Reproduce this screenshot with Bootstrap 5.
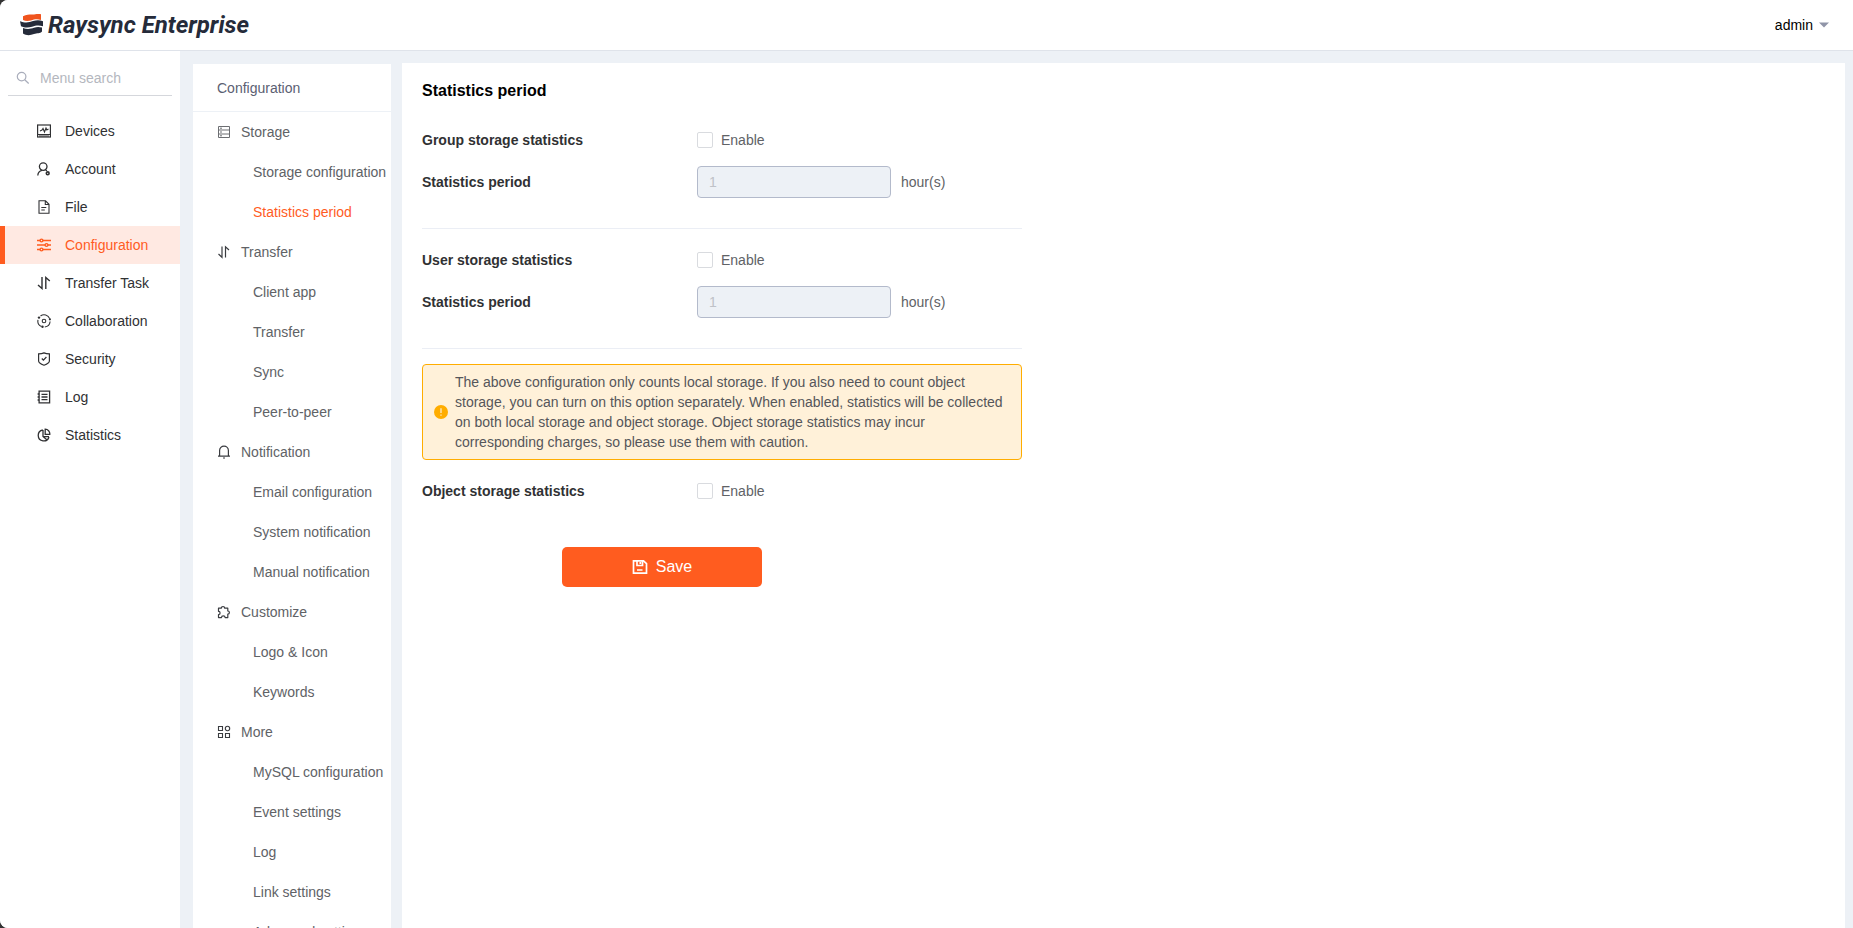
<!DOCTYPE html>
<html lang="en">
<head>
<meta charset="utf-8">
<meta name="viewport" content="width=device-width, initial-scale=1">
<title>Raysync Enterprise</title>
<link href="https://cdn.jsdelivr.net/npm/bootstrap@5.3.0/dist/css/bootstrap.min.css" rel="stylesheet">
<style>
  :root { --brand: #ff5c1f; --page: #edf1f6; --ink: #303133; --soft: #606266; }
  html { background: #333; }
  body { background: transparent; font-family: "Liberation Sans", Arial, sans-serif; font-size: 14px; line-height: 20px; color: var(--soft); }
  a { color: inherit; text-decoration: none; }
  svg { flex: none; }
  .app { background: var(--page); border-radius: 8px 0 0 8px; }
  .topbar { height: 51px; background: #fff; border-bottom: 1px solid #dfe3ea; padding: 0 24px 0 20px; }
  .brand-name { font-family: Roboto, sans-serif; font-weight: 700; font-style: italic; font-size: 24px; line-height: 28px; color: #252b3a; }
  .user-btn { color: #000; font-size: 14px; line-height: 20px; gap: 6px; }
  .side { width: 180px; background: #fff; }
  .search { margin: 0 8px 16px; height: 45px; padding: 10px 8px 0; border-bottom: 1px solid #d5d7dc; gap: 10px; }
  .search input { font-size: 14px; outline: 0; background: none; }
  .search input::placeholder { color: #b4b7be; opacity: 1; }
  .side-link { height: 38px; padding: 0 0 0 32px; border-left: 5px solid transparent; gap: 14px; color: var(--ink); }
  .side-link.active { background: #ffe9e2; border-color: var(--brand); color: var(--brand); }
  .subnav { width: 198px; background: #fff; margin: 13px 11px 0 13px; }
  .subnav-head { height: 48px; padding: 0 24px; border-bottom: 1px solid var(--page); font-size: 14px; line-height: 49px; color: #5b6072; }
  .group { height: 40px; padding-left: 24px; gap: 10px; }
  .group svg { color: #3a3c40; }
  .sub { height: 40px; padding-left: 60px; white-space: nowrap; }
  .sub.active { color: var(--brand); }
  .panel { background: #fff; margin: 12px 8px 0 0; padding: 16px 20px; }
  .panel h1 { font-size: 16px; line-height: 24px; font-weight: 700; color: #000; margin: 0 0 21px; }
  .narrow { max-width: 600px; }
  .field-row { height: 32px; }
  .field-name { width: 275px; font-weight: 700; color: var(--ink); }
  .section { border-bottom: 1px solid #ebeef5; height: 105px; margin-bottom: 15px; }
  .section .field-row { margin-bottom: 10px; }
  .form-check-input.box { width: 16px; height: 16px; margin: 0; border: 1px solid #d9dbdf; border-radius: 2px; }
  .hours { width: 194px; height: 32px; padding: 0 11px; border: 1px solid #b3bacb; border-radius: 4px; font-size: 14px; }
  .hours:disabled { background: #edf1f6; color: #bfc2c8; }
  .unit { margin-left: 10px; }
  .notice { border: 1px solid #ffad00; border-radius: 4px; background: #fff1d9; padding: 7px 16px 7px 11px; gap: 7px; color: #55565a; margin-bottom: 15px; }
  .save { width: 200px; height: 40px; margin: 40px 0 0 140px; background: var(--brand); border: 0; border-radius: 5px; color: #fff; font-size: 16px; }
  .save:hover { background: #f04e12; color: #fff; }
</style>
</head>
<body>
<div class="app vh-100 d-flex flex-column overflow-hidden">
  <header class="topbar d-flex align-items-center justify-content-between flex-shrink-0">
    <a href="#" class="d-flex align-items-center gap-1">
      <svg width="24" height="22" viewBox="0 0 24 22" aria-hidden="true">
        <path fill="#f0541e" d="M3 2.200C8-.1 11 .5 14 .4 17 .1 19 0 21 .2V6C17 4.700 14 5.600 11 6.400 8 7.200 5 7 3 6z"/>
        <path fill="#252b3a" d="M0 7.200C5 9.300 9 8.700 13 7.100 17 5.700 20 6.100 23 7.200V12.200C19 10.900 16 11.200 12 12.700 8 14 4 13.500 1 12.200zM3 14C7 15.700 11 15 14 13.800 17 12.700 19 12.700 22 13.600V17.500C20 19.700 17 19 14 20 10 21.700 6 21.500 3 19.600z"/>
      </svg>
      <span class="brand-name">Raysync Enterprise</span>
    </a>
    <button type="button" class="user-btn btn p-0 border-0 d-flex align-items-center">admin
      <svg width="10" height="6" viewBox="0 0 10 6" aria-hidden="true"><path fill="#9095a8" d="M0 .5h10L5 5.500z"/></svg>
    </button>
  </header>

  <div class="d-flex flex-grow-1 overflow-hidden">
    <aside class="side flex-shrink-0">
      <label class="search d-flex align-items-center">
        <svg width="14" height="14" viewBox="0 0 14 14" fill="none" stroke="#a9adbb" stroke-width="1.200" aria-hidden="true"><circle cx="5.600" cy="5.600" r="4.300"/><path d="M8.700 8.700l4 3.800"/></svg>
        <input type="text" class="border-0 p-0 w-100" placeholder="Menu search" aria-label="Menu search">
      </label>
      <nav>
        <a href="#" class="side-link d-flex align-items-center">
          <svg width="14" height="14" viewBox="0 0 14 14" fill="none" stroke="currentColor" aria-hidden="true"><rect x=".6" y="1" width="12.800" height="12" stroke-width="1.200"/><path d="M1 10.500h12M3 7l2-1 1-1.500L7.500 8 9 4l.8 2L11.500 5M2 12h10" stroke-width="1.100"/></svg>Devices</a>
        <a href="#" class="side-link d-flex align-items-center">
          <svg width="14" height="14" viewBox="0 0 14 14" fill="none" stroke="currentColor" stroke-width="1.300" aria-hidden="true"><circle cx="6.200" cy="4.600" r="3.800"/><path d="M.8 13.500C1 10.500 3 8.700 5 8.300M8.500 8l1.500.8"/><circle cx="10.700" cy="11.300" r="1.400" stroke-width="1.600"/></svg>Account</a>
        <a href="#" class="side-link d-flex align-items-center">
          <svg width="14" height="14" viewBox="0 0 14 14" fill="none" stroke="currentColor" stroke-width="1.100" aria-hidden="true"><path d="M2 .8h6.500L12 4.300v9H2zM8.300.8v3.700H12M4.300 7.500h5M4.300 10h3.500"/></svg>File</a>
        <a href="#" class="side-link active d-flex align-items-center" aria-current="page">
          <svg width="14" height="14" viewBox="0 0 14 14" fill="none" stroke="currentColor" stroke-width="1.400" aria-hidden="true"><path d="M0 2.500h3M6 2.500h8M0 7h8M11 7h3M0 11.500h3M6 11.500h8"/><circle cx="4.500" cy="2.500" r="1.400"/><circle cx="9.500" cy="7" r="1.400"/><circle cx="4.500" cy="11.500" r="1.400"/></svg>Configuration</a>
        <a href="#" class="side-link d-flex align-items-center">
          <svg width="14" height="14" viewBox="0 0 14 14" fill="none" stroke="currentColor" stroke-width="1.400" aria-hidden="true"><path d="M5 1v11.500L1 9M8.800 13V1.500L12.800 5"/></svg>Transfer Task</a>
        <a href="#" class="side-link d-flex align-items-center">
          <svg width="14" height="14" viewBox="0 0 14 14" fill="none" stroke="currentColor" stroke-width="1.100" aria-hidden="true"><path d="M3.500 2A6.100 6.100 0 0 1 12.700 4.600M13.100 7.500A6.100 6.100 0 0 1 7.800 13M4.500 12.600A6.100 6.100 0 0 1 1 5.800"/><circle cx="7" cy="7" r="1.800"/><g fill="currentColor" stroke="none"><circle cx="2" cy="3.600" r="1.200"/><circle cx="12.900" cy="5.300" r="1.100"/><circle cx="5.500" cy="12.800" r="1.200"/></g></svg>Collaboration</a>
        <a href="#" class="side-link d-flex align-items-center">
          <svg width="14" height="14" viewBox="0 0 14 14" fill="none" stroke="currentColor" stroke-width="1.200" aria-hidden="true"><path d="M1.600 1.900C4 1.900 5.700 1.500 7 .9c1.300.6 3 1 5.400 1V9c0 1.700-3 3.300-5.400 4.200C4.600 12.300 1.600 10.700 1.600 9zM4.800 6.500l1.600 1.700 3-3.200"/></svg>Security</a>
        <a href="#" class="side-link d-flex align-items-center">
          <svg width="14" height="14" viewBox="0 0 14 14" fill="none" stroke="currentColor" stroke-width="1.300" aria-hidden="true"><path d="M2.100 1.100h10.500v11.800H2.100zM4.500 4.300h6M4.500 7h6M4.500 9.700h6M.6 4h2.200M.6 7h2.200M.6 10h2.200"/></svg>Log</a>
        <a href="#" class="side-link d-flex align-items-center">
          <svg width="14" height="14" viewBox="0 0 14 14" fill="none" stroke="currentColor" stroke-width="1.300" aria-hidden="true"><path d="M5.800 2A5.500 5.500 0 1 0 12 9M6 2v6.500l3.500 3M8.200 1.200A4.700 4.700 0 0 1 12.800 6.300H8.200zM6 8.600h6"/></svg>Statistics</a>
      </nav>
    </aside>

    <nav class="subnav flex-shrink-0 overflow-hidden" aria-label="Configuration">
      <h2 class="subnav-head m-0 fw-normal">Configuration</h2>
      <div class="group d-flex align-items-center">
        <svg width="14" height="14" viewBox="0 0 14 14" fill="none" stroke="#6c6e72" aria-hidden="true"><path d="M1.500 1.500h11v11h-11zM1.500 5h11M1.500 9h11M3 3.200h2M3 7h2M3 10.800h2"/></svg>Storage</div>
      <a href="#" class="sub d-flex align-items-center">Storage configuration</a>
      <a href="#" class="sub active d-flex align-items-center" aria-current="page">Statistics period</a>
      <div class="group d-flex align-items-center">
        <svg width="14" height="14" viewBox="0 0 14 14" fill="none" stroke="currentColor" stroke-width="1.200" aria-hidden="true"><path d="M5 1.500v10.800L1.500 9M8.500 12.500V1.800L12 5"/></svg>Transfer</div>
      <a href="#" class="sub d-flex align-items-center">Client app</a>
      <a href="#" class="sub d-flex align-items-center">Transfer</a>
      <a href="#" class="sub d-flex align-items-center">Sync</a>
      <a href="#" class="sub d-flex align-items-center">Peer-to-peer</a>
      <div class="group d-flex align-items-center">
        <svg width="14" height="14" viewBox="0 0 14 14" fill="none" stroke="currentColor" stroke-width="1.200" aria-hidden="true"><path d="M2.600 11V5.500a4.400 4.400 0 0 1 8.800 0V11M1 11.200h12M6 13h2"/></svg>Notification</div>
      <a href="#" class="sub d-flex align-items-center">Email configuration</a>
      <a href="#" class="sub d-flex align-items-center">System notification</a>
      <a href="#" class="sub d-flex align-items-center">Manual notification</a>
      <div class="group d-flex align-items-center">
        <svg width="14" height="14" viewBox="0 0 14 14" fill="none" stroke="currentColor" stroke-width="1.200" stroke-linejoin="round" aria-hidden="true"><path d="M1.500 3.200H4.300A1.700 1.700 0 1 1 7.700 3.200H10.800V6A1.600 1.600 0 1 1 10.800 9.200V12.600H8.100A1.600 1.600 0 1 0 4.500 12.600H1.500V9.500A1.600 1.600 0 1 0 1.500 6.300z"/></svg>Customize</div>
      <a href="#" class="sub d-flex align-items-center">Logo &amp; Icon</a>
      <a href="#" class="sub d-flex align-items-center">Keywords</a>
      <div class="group d-flex align-items-center">
        <svg width="14" height="14" viewBox="0 0 14 14" fill="none" stroke="currentColor" stroke-width="1.100" aria-hidden="true"><path d="M1.500 1.500h4v4h-4zM1.500 8.500h4v4h-4zM8.500 8.500h4v4h-4z"/><circle cx="10.500" cy="3.500" r="2.200"/></svg>More</div>
      <a href="#" class="sub d-flex align-items-center">MySQL configuration</a>
      <a href="#" class="sub d-flex align-items-center">Event settings</a>
      <a href="#" class="sub d-flex align-items-center">Log</a>
      <a href="#" class="sub d-flex align-items-center">Link settings</a>
      <a href="#" class="sub d-flex align-items-center">Advanced settings</a>
    </nav>

    <main class="panel flex-grow-1 overflow-auto">
      <h1>Statistics period</h1>
      <form class="narrow" onsubmit="return false">
        <div class="section">
          <div class="field-row d-flex align-items-center">
            <span class="field-name">Group storage statistics</span>
            <input type="checkbox" class="form-check-input box" id="groupOn"><label class="ps-2" for="groupOn">Enable</label>
          </div>
          <div class="field-row d-flex align-items-center">
            <label class="field-name" for="groupHours">Statistics period</label>
            <input type="text" class="hours" id="groupHours" value="1" disabled><span class="unit">hour(s)</span>
          </div>
        </div>
        <div class="section">
          <div class="field-row d-flex align-items-center">
            <span class="field-name">User storage statistics</span>
            <input type="checkbox" class="form-check-input box" id="userOn"><label class="ps-2" for="userOn">Enable</label>
          </div>
          <div class="field-row d-flex align-items-center">
            <label class="field-name" for="userHours">Statistics period</label>
            <input type="text" class="hours" id="userHours" value="1" disabled><span class="unit">hour(s)</span>
          </div>
        </div>
        <div class="notice d-flex align-items-center" role="note">
          <svg width="14" height="14" viewBox="0 0 14 14" aria-hidden="true"><circle cx="7" cy="7" r="7" fill="#ffad00"/><path stroke="#fff1d9" stroke-width="1.200" d="M7 3.300v4.700M7 9.500v1.300"/></svg>
          <span>The above configuration only counts local storage. If you also need to count object storage, you can turn on this option separately. When enabled, statistics will be collected on both local storage and object storage. Object storage statistics may incur corresponding charges, so please use them with caution.</span>
        </div>
        <div class="field-row d-flex align-items-center">
          <span class="field-name">Object storage statistics</span>
          <input type="checkbox" class="form-check-input box" id="objectOn"><label class="ps-2" for="objectOn">Enable</label>
        </div>
        <button type="submit" class="save btn d-flex align-items-center justify-content-center gap-2 p-0">
          <svg width="16" height="16" viewBox="0 0 16 16" fill="none" stroke="#fff" stroke-width="1.700" aria-hidden="true"><path d="M1.500 1.800h10l3 2.800v9.600h-13zM5 2v4.500h5.500V2M8.300 3v2M5 11h5.500"/></svg>Save
        </button>
      </form>
    </main>
  </div>
</div>
<script src="https://cdn.jsdelivr.net/npm/bootstrap@5.3.0/dist/js/bootstrap.bundle.min.js"></script>
</body>
</html>
